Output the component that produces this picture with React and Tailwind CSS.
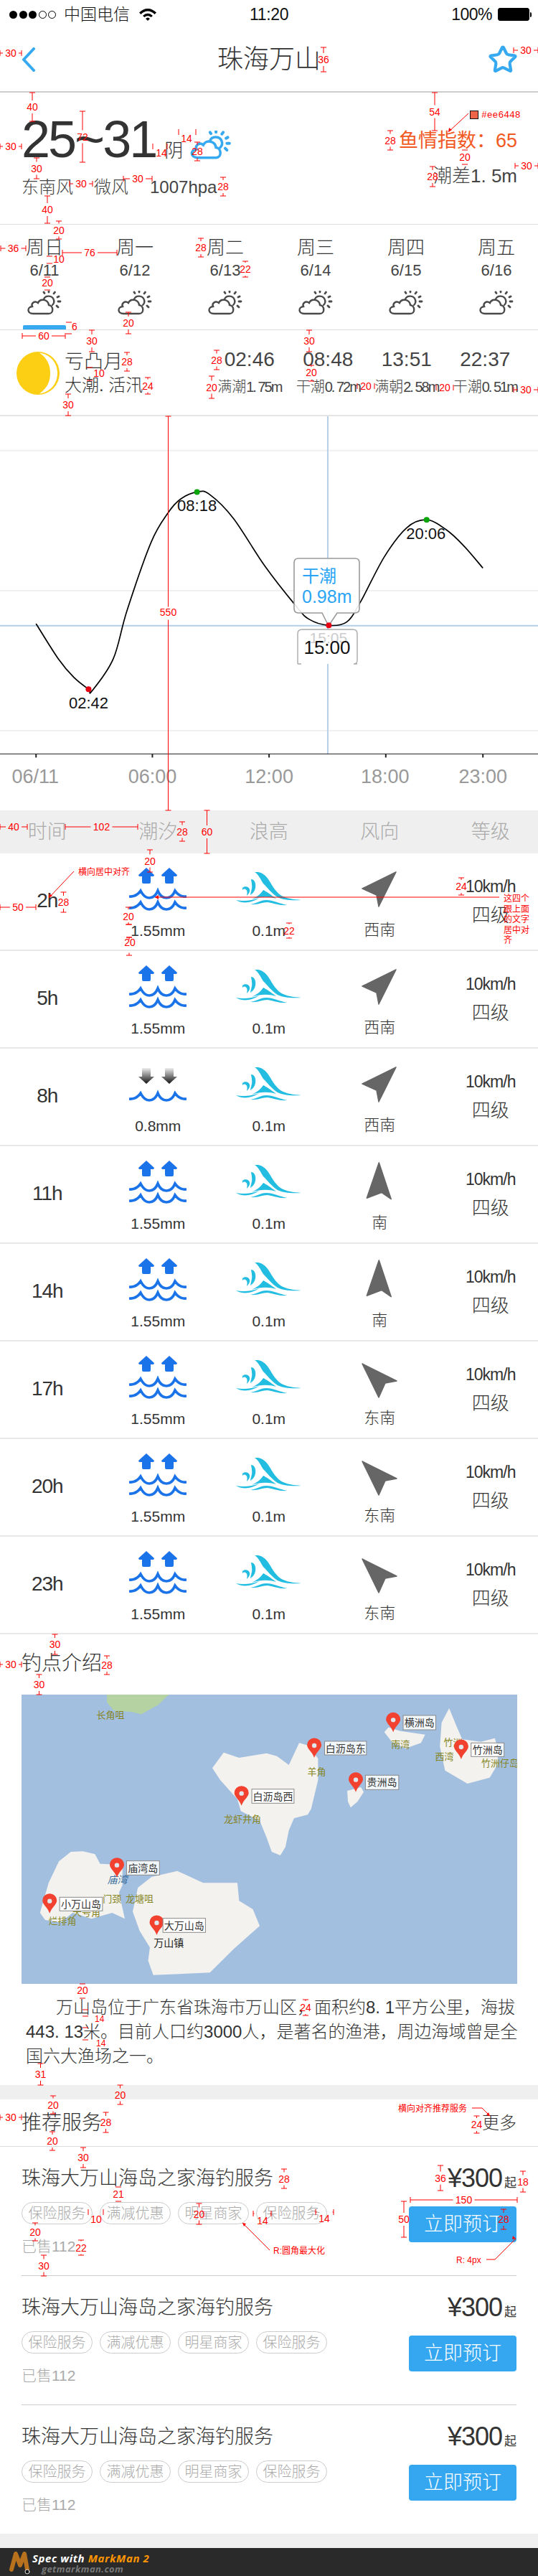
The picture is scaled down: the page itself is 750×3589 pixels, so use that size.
import React from 'react';
import { Star } from 'lucide-react';

const RED = '#f00';

// --- spec overlay helpers (red measuring marks on top of the design) ---
function HDim({ x1, x2, y, label, lx, ly }) {
  const cx = (x1 + x2) / 2;
  const gap = label.length * 4 + 3;
  const split = x2 - x1 > gap * 2 + 2;
  return (
    <g>
      <path d={`M${x1} ${y - 4}V${y + 4}M${x2} ${y - 4}V${y + 4}`} stroke={RED} fill="none" />
      {split && <path d={`M${x1} ${y}H${cx - gap}M${cx + gap} ${y}H${x2}`} stroke={RED} fill="none" />}
      <text x={lx ?? cx} y={ly ?? y} fill={RED} fontSize="14" textAnchor="middle" dominantBaseline="central">{label}</text>
    </g>
  );
}

function VDim({ x, y1, y2, label, lx, ly }) {
  const cy = (y1 + y2) / 2;
  const split = y2 - y1 > 20;
  return (
    <g>
      <path d={`M${x - 4} ${y1}H${x + 4}M${x - 4} ${y2}H${x + 4}`} stroke={RED} fill="none" />
      {split && <path d={`M${x} ${y1}V${cy - 9}M${x} ${cy + 9}V${y2}`} stroke={RED} fill="none" />}
      {label && <text x={lx ?? x} y={ly ?? cy} fill={RED} fontSize="14" textAnchor="middle" dominantBaseline="central">{label}</text>}
    </g>
  );
}

const hDims = [
  [0, 30, 74, '30'], [716, 750, 70, '30'], [0, 30, 204, '30'], [213, 233, 204, '14', 225, 213],
  [249, 273, 184, '14', 260, 193], [97, 129, 256, '30'], [172, 212, 249, '30'], [718, 750, 231, '30'],
  [1, 36, 346, '36'], [87, 163, 352, '76'], [31, 91, 468, '60'], [498, 522, 538, '20'], [608, 632, 540, '20'],
  [716, 750, 543, '30'], [0, 38, 1152, '40'], [91, 192, 1152, '102'], [0, 50, 1264, '50'], [0, 30, 2319, '30'],
  [0, 30, 2950, '30'], [572, 721, 3065, '150'], [123, 144, 3082, '10', 134, 3092], [353, 378, 3084, '14', 366, 3094],
  [440, 465, 3082, '14', 452, 3091],
];

const vDims = [
  [451, 66, 100, '36'], [45, 129, 169, '40'], [115, 155, 226, '72'], [275, 198, 224, '28'], [51, 220, 249, '30'],
  [311, 247, 273, '28'], [66, 273, 311, '40'], [606, 129, 182, '54'], [544, 182, 209, '28'], [648, 209, 229, '20'],
  [603, 232, 260, '28'], [82, 308, 333, '20'], [280, 332, 358, '28'], [69, 357, 367, '10', 82, 361],
  [342, 364, 386, '22'], [66, 386, 404, '20', 66, 394], [179, 435, 465, '20'], [96, 449, 465, '6', 104, 455],
  [128, 460, 490, '30'], [431, 460, 490, '30'], [177, 491, 517, '28'], [125, 512, 530, '10', 138, 520],
  [206, 526, 549, '24'], [95, 549, 579, '30'], [302, 488, 515, '28'], [295, 524, 555, '20'], [434, 509, 531, '20', 434, 519],
  [234.5, 580, 1129, '550', 234.5, 853], [254, 1145, 1172, '28'], [288.5, 1129, 1189, '60'], [209, 1184, 1215, '20'],
  [88.5, 1243, 1271, '28'], [643, 1223, 1247, '24'], [179, 1264, 1288, '20', 179, 1277], [180, 1288, 1306],
  [180, 1306, 1331, '20', 181, 1313], [403, 1286, 1307, '22'], [76.5, 2277, 2305, '30'], [149, 2307, 2333, '28'],
  [54.5, 2333, 2361, '30'], [115, 2764, 2784, '20', 115, 2773], [119, 2800, 2809], [119, 2825, 2842],
  [426, 2786, 2808, '24'], [56.5, 2875, 2905, '31'], [167.5, 2905, 2932, '20'], [74, 2920, 2945, '20'],
  [147.5, 2943, 2971, '28'], [73, 2970, 2996, '20'], [664.5, 2948, 2972, '24'], [116, 2992, 3020, '30'],
  [396, 3022, 3049, '28'], [165, 3047, 3067, '21'], [614, 3017, 3052, '36'], [729, 3025, 3054, '18'],
  [563, 3067, 3117, '50'], [702, 3078, 3106, '28'], [277.5, 3070, 3099, '20'], [49, 3097, 3122, '20'],
  [113, 3121, 3142, '22'], [61, 3142, 3171, '30'],
];

const notes = [
  [132, 2813, '14'], [134, 2847, '14'],
  [109, 1215, '横向居中对齐'], [702, 1252, '这四个'], [702, 1267, '跟上面'], [702, 1281, '的文字'], [702, 1296, '居中对'], [702, 1310, '齐'],
  [555, 2938, '横向对齐推荐服务'], [381, 3136, 'R:圆角最大化'], [636, 3149, 'R: 4px'],
];

const arrows = [
  'M653 158L625 184', 'M103 1214L68 1251', 'M696 1250H216', 'M658 2937H672L683 2948',
  'M376 3135L338 3097', 'M678 3148H690L719 3119',
];

function SpecOverlay() {
  return (
    <svg className="absolute left-0 top-0 pointer-events-none" width="750" height="3589">
      {hDims.map(([x1, x2, y, label, lx, ly], i) => <HDim key={i} x1={x1} x2={x2} y={y} label={label} lx={lx} ly={ly} />)}
      {vDims.map(([x, y1, y2, label, lx, ly], i) => <VDim key={i} x={x} y1={y1} y2={y2} label={label} lx={lx} ly={ly} />)}
      {arrows.map((d, i) => <path key={i} d={d} stroke={RED} fill="none" />)}
      <path d="M625 184l1-6 4 3zM68 1251l1-6 4 3zM216 1250l5-3v6zM683 2948l-5-1 3-4zM338 3097l5 1-3 4zM719 3119l-5 1 1-5z" fill={RED} />
      {notes.map(([x, y, t], i) => <text key={i} x={x} y={y} fill={RED} fontSize="12" dominantBaseline="central">{t}</text>)}
      <rect x="655.5" y="154.5" width="11" height="11" fill="#ee6448" stroke="#111" />
      <text x="671" y="160" fill={RED} fontSize="13" dominantBaseline="central" fontFamily="Liberation Mono">#ee6448</text>
    </svg>
  );
}

// --- icons ---
function WeatherIcon({ className, color = '#4a4a4a', sw = 2.4 }) {
  return (
    <svg className={className} viewBox="0 0 50 34" fill="none" stroke={color} strokeWidth={sw} strokeLinecap="round">
      <path d="M9 32H31C38 32 38 21 31 20C30 12 19 10 16 17C11 13 6 18 8 22C0 23 1 32 9 32Z" />
      <path d="M24 12C26 6 36 6 38 13C39 16 38 18 36 20" />
      <path d="M31 2V0.8M38 4L39.5 2M43 9L45 8M44 15H47M42 21L44 23M25 3.5L24 2" strokeWidth={sw + 0.4} />
    </svg>
  );
}

function Moon() {
  return (
    <svg width="60" height="60" viewBox="0 0 60 60" className="shrink-0">
      <circle cx="30" cy="30" r="30" fill="#fccf14" />
      <path d="M32 1.5C48 4 57 16 57 30C57 44 48 56 32 58.5C44 50 47 40 47 30C47 20 44 10 32 1.5Z" fill="#fff" />
    </svg>
  );
}

function Waves({ y }) {
  return (
    <path
      d={`M0 ${y + 9}Q10 ${y + 10} 16 ${y + 1}Q21 ${y + 11} 28 ${y + 11}Q36 ${y + 11} 40 ${y + 1}Q44 ${y + 11} 52 ${y + 11}Q60 ${y + 11} 64 ${y + 1}Q70 ${y + 10} 80 ${y + 9}`}
      stroke="#1a73e8" strokeWidth="3.6" fill="none"
    />
  );
}

const upArrow = 'M11 0L22 10Q22 12 20 12H17V20Q17 22 15 22H7Q5 22 5 20V12H2Q0 12 0 10Z';
const downArrow = 'M5 0H17V12H22L11 22L0 12H5Z';

function TideIcon({ down }) {
  return (
    <svg width="80" height="60" viewBox="0 0 80 60">
      <defs>
        <linearGradient id="fade" x1="0" y1="0" x2="0" y2="1">
          <stop offset="0" stopColor="#eeeeee" />
          <stop offset="1" stopColor="#111111" />
        </linearGradient>
      </defs>
      {down ? (
        <>
          <path d={downArrow} transform="translate(13 7)" fill="url(#fade)" />
          <path d={downArrow} transform="translate(45 7)" fill="url(#fade)" />
          <Waves y={41} />
        </>
      ) : (
        <>
          <path d={upArrow} transform="translate(13 0)" fill="#1a73e8" />
          <path d={upArrow} transform="translate(45 0)" fill="#1a73e8" />
          <Waves y={31} />
          <Waves y={47} />
        </>
      )}
    </svg>
  );
}

function WaveIcon() {
  return (
    <svg width="92" height="48" viewBox="0 0 92 48" fill="#22bde0">
      <path d="M26 0C34 -1 40 3 45 10C50 18 55 27 62 32C70 37 80 38 91 39C78 40 66 39 58 35C50 30 44 22 38 16C34 10 32 4 26 0Z" />
      <path d="M38 25C42 27 48 31 56 37C46 34 34 34 22 38C30 34 35 30 38 25Z" />
      <path d="M21 10C26 10 28 16 27 22C26 27 23 30 20 32C21 26 23 22 22 17C22 14 21 12 21 10Z" />
      <path d="M9 22C12 19 18 20 19 24C20 28 17 31 15 33C16 29 16 25 13 24C11 23 10 24 9 25Z" />
      <path d="M0 39C10 41 22 40 32 36C24 42 12 44 4 41Z" />
      <path d="M20 45C28 44 34 39 42 39C52 39 60 44 72 46C60 47 52 43 44 42C36 42 30 46 20 45Z" />
    </svg>
  );
}

function NavArrow({ className }) {
  return (
    <svg width="50" height="50" viewBox="0 0 50 50" className={className}>
      <path d="M48 1L1 24L21 33L24 49Z" fill="#666" stroke="#666" strokeWidth="1.5" strokeLinejoin="round" />
    </svg>
  );
}

// --- chart ---
const pts = [
  [105, 756], [170, 880], [215, 945], [258, 987], [268, 993], [330, 880], [370, 710], [440, 470], [490, 365], [525, 318],
  [574, 292], [610, 300], [680, 385], [770, 550], [860, 690], [900, 740], [958, 762], [1010, 750], [1050, 680], [1120, 520],
  [1185, 418], [1243, 390], [1300, 425], [1350, 480], [1407, 560],
];
const cx = (z) => z / 2.09;
const cy = (z) => z / 2.529 - 10;

function curvePath() {
  const p = pts.map(([x, y]) => [cx(x), cy(y)]);
  let d = `M${p[0][0]} ${p[0][1]}`;
  for (let i = 0; i < p.length - 1; i++) {
    const a = p[i - 1] || p[i];
    const b = p[i];
    const c = p[i + 1];
    const e = p[i + 2] || c;
    d += `C${b[0] + (c[0] - a[0]) / 6} ${b[1] + (c[1] - a[1]) / 6} ${c[0] - (e[0] - b[0]) / 6} ${c[1] - (e[1] - b[1]) / 6} ${c[0]} ${c[1]}`;
  }
  return d;
}

function TideChart() {
  return (
    <svg width="750" height="549" viewBox="0 0 750 549" className="block">
      {[146, 640, 1133].map((z) => <line key={z} x1="0" x2="750" y1={cy(z)} y2={cy(z)} stroke="#f0f0f0" strokeWidth="2" />)}
      <line x1="0" x2="750" y1={cy(763)} y2={cy(763)} stroke="#b6cfe9" strokeWidth="2" />
      <line x1={cx(955)} x2={cx(955)} y1="0" y2={cy(1215)} stroke="#b6cfe9" strokeWidth="2" />
      <path d={curvePath()} fill="none" stroke="#000" strokeWidth="1.7" />
      <line x1="0" x2="750" y1={cy(1215)} y2={cy(1215)} stroke="#222" />
      {[105, 444, 784, 1124, 1407].map((z) => <line key={z} x1={cx(z)} x2={cx(z)} y1={cy(1215)} y2={cy(1215) + 5} stroke="#222" strokeWidth="2" />)}
      {[['06/11', 103], ['06:00', 444], ['12:00', 784], ['18:00', 1122], ['23:00', 1407]].map(([t, z]) => (
        <text key={t} x={cx(z)} y={cy(1295)} fill="#999" fontSize="27" textAnchor="middle" dominantBaseline="central">{t}</text>
      ))}
      <circle cx={cx(258)} cy={cy(987)} r="4" fill="#e60012" />
      <circle cx={cx(574)} cy={cy(292)} r="4" fill="#0aa50a" />
      <circle cx={cx(1243)} cy={cy(390)} r="4" fill="#0aa50a" />
      {[['02:42', 258, 1035], ['08:18', 574, 340], ['20:06', 1241, 438]].map(([t, x, y]) => (
        <text key={t} x={cx(x)} y={cy(y)} fill="#111" fontSize="22" textAnchor="middle" dominantBaseline="central">{t}</text>
      ))}
      <path d="M416 198H495Q501 198 501 204V268Q501 274 495 274H470L458 292L449 274H416Q410 274 410 268V204Q410 198 416 198Z" fill="#fff" fillOpacity="0.9" stroke="#999" strokeWidth="1.6" />
      <circle cx={cx(958)} cy={cy(762)} r="4" fill="#e60012" />
      <text x="421" y="222" fill="#2aa5f5" fontSize="24" dominantBaseline="central">干潮</text>
      <text x="421" y="251" fill="#2aa5f5" fontSize="25" dominantBaseline="central">0.98m</text>
      <path d="M415 345V303Q415 297 421 297H492Q498 297 498 303V340Q498 345 493 345M420 345H415M493 345H498" fill="#fff" stroke="#aaa" strokeWidth="1.4" />
      <text x={cx(957)} y={cy(805)} fill="#ccc" fontSize="21" textAnchor="middle" dominantBaseline="central">15:05</text>
      <text x={cx(953)} y={cy(840)} fill="#111" fontSize="26" textAnchor="middle" dominantBaseline="central">15:00</text>
    </svg>
  );
}

// --- map ---
const mx = (z) => z / 2.09 - 29.2;
const my = (z) => z / 3 - 111;
const poly = (a) => a.map(([x, y]) => `${mx(x)},${my(y)}`).join(' ');

const islands = [
  [[617, 640], [650, 575], [695, 597], [775, 578], [805, 590], [840, 627], [870, 535], [895, 545], [925, 600], [925, 690], [905, 810], [895, 835], [855, 850], [840, 900], [830, 970], [815, 1005], [790, 990], [775, 930], [755, 860], [700, 820], [690, 770], [640, 690]],
  [[1118, 490], [1130, 470], [1165, 485], [1237, 500], [1225, 535], [1180, 558], [1140, 530]],
  [[1307, 390], [1330, 470], [1345, 520], [1400, 530], [1440, 515], [1445, 540], [1450, 620], [1425, 680], [1360, 705], [1295, 650], [1280, 550], [1285, 450]],
  [[1010, 735], [1050, 720], [1058, 740], [1040, 780], [1020, 805], [1012, 780]],
  [[115, 1245], [140, 1120], [170, 1030], [205, 990], [240, 988], [275, 1000], [290, 1040], [355, 1045], [355, 1130], [345, 1160], [362, 1270], [325, 1245], [265, 1270], [210, 1245], [175, 1285], [130, 1275]],
  [[385, 1240], [400, 1140], [440, 1095], [515, 1070], [590, 1120], [690, 1120], [695, 1195], [735, 1230], [755, 1300], [680, 1395], [610, 1495], [445, 1505], [430, 1445], [435, 1390], [405, 1320]],
];
const greenland = [[310, 333], [490, 333], [460, 375], [410, 415], [380, 405], [330, 400], [310, 365]];

const placeLabels = [
  ['长角咀', 320, 418], ['南湾', 1165, 540], ['羊角', 921, 655], ['龙虾井角', 705, 852], ['竹洲', 1318, 533], ['西湾', 1293, 592],
  ['竹洲仔岛', 1455, 618], ['门颈', 325, 1187], ['龙塘咀', 405, 1187], ['烂排角', 180, 1280], ['天号角', 250, 1243],
];

const spots = [
  ['横洲岛', 1144, 490, 1173, 1268, 420, 480], ['白沥岛东', 914, 597, 944, 1066, 528, 585], ['白沥岛西', 702, 797, 732, 855, 728, 787],
  ['贵洲岛', 1035, 740, 1063, 1160, 670, 730], ['竹洲岛', 1342, 603, 1371, 1467, 535, 592], ['庙湾岛', 339, 1097, 367, 463, 1028, 1087],
  ['小万山岛', 143, 1247, 172, 297, 1180, 1237], ['大万山岛', 455, 1338, 473, 597, 1268, 1327],
];

function MapView() {
  return (
    <svg width="691" height="403" viewBox="0 0 691 403" className="block bg-[#a3bfdf]">
      <polygon points={poly(greenland)} fill="#b5d3a2" />
      {islands.map((a, i) => <polygon key={i} points={poly(a)} fill="#f3f2ee" />)}
      {placeLabels.map(([t, x, y]) => (
        <text key={t} x={mx(x)} y={my(y)} fill="#85851f" fontSize="13" textAnchor="middle" dominantBaseline="central">{t}</text>
      ))}
      <text x={mx(340)} y={my(1107)} fill="#3a6fa0" fontSize="14" fontStyle="italic" textAnchor="middle" dominantBaseline="central">庙湾</text>
      <text x={mx(490)} y={my(1370)} fill="#222" fontSize="14" textAnchor="middle" dominantBaseline="central">万山镇</text>
      {spots.map(([t, x, y, x1, x2, y1, y2]) => (
        <g key={t}>
          <path d={`M${mx(x)} ${my(y)}C${mx(x) - 3} ${my(y) - 9} ${mx(x) - 10} ${my(y) - 12} ${mx(x) - 10} ${my(y) - 18}A10 9.5 0 0 1 ${mx(x) + 10} ${my(y) - 18}C${mx(x) + 10} ${my(y) - 12} ${mx(x) + 3} ${my(y) - 9} ${mx(x)} ${my(y)}Z`} fill="#f2412e" />
          <circle cx={mx(x)} cy={my(y) - 17} r="3.2" fill="#dfe6ec" />
          <rect x={mx(x1)} y={my(y1)} width={(x2 - x1) / 2.09} height={(y2 - y1) / 3} fill="#fff" fillOpacity="0.85" stroke="#8a8a8a" />
          <text x={(mx(x1) + mx(x2)) / 2} y={(my(y1) + my(y2)) / 2} fill="#333" fontSize="14" textAnchor="middle" dominantBaseline="central">{t}</text>
        </g>
      ))}
    </svg>
  );
}

// --- data ---
const forecast = [
  ['周日', '6/11'], ['周一', '6/12'], ['周二', '6/13'], ['周三', '6/14'], ['周四', '6/15'], ['周五', '6/16'],
];
const tides = [
  ['02:46', '满潮', '1. 75m'], ['08:48', '干潮', '0. 72m'], ['13:51', '满朝', '2. 58m'], ['22:37', '干潮', '0. 51m'],
];
const navNE = '';
const navN = '-rotate-45 translate-y-[6px]';
const navNW = '-rotate-90 translate-y-[4px]';
const rows = [
  ['2h', false, '1.55mm', '西南', navNE], ['5h', false, '1.55mm', '西南', navNE], ['8h', true, '0.8mm', '西南', navNE],
  ['11h', false, '1.55mm', '南', navN], ['14h', false, '1.55mm', '南', navN], ['17h', false, '1.55mm', '东南', navNW],
  ['20h', false, '1.55mm', '东南', navNW], ['23h', false, '1.55mm', '东南', navNW],
];
const tags = ['保险服务', '满减优惠', '明星商家', '保险服务'];

function ServiceItem({ last }) {
  return (
    <div className={`mx-[30px] flex justify-between ${last ? 'h-[179px]' : 'h-[180px] border-b border-[#ccc]'}`}>
      <div className="pt-[30px]">
        <div className="text-[27px] leading-[28px] text-[#333] font-light">珠海大万山海岛之家海钓服务</div>
        <div className="flex gap-[11px] mt-[19px]">
          {tags.map((t, i) => (
            <span key={i} className="w-[99px] h-[31px] -ml-px first:ml-0 flex items-center justify-center rounded-full border border-[#ccc] text-[20px] text-[#aaa] font-light">{t}</span>
          ))}
        </div>
        <div className="mt-[20px] text-[21px] leading-[22px] text-[#aaa] font-light">已售112</div>
      </div>
      <div className="pt-[26px] flex flex-col items-end">
        <div className="flex items-baseline leading-[36px] text-[#333]">
          <span className="text-[36px] tracking-[-1px]">¥300</span>
          <span className="text-[17px] ml-[3px]">起</span>
        </div>
        <button className="mt-[14px] w-[150px] h-[50px] rounded-[4px] bg-[#35a7f0] text-white text-[27px] font-light">立即预订</button>
      </div>
    </div>
  );
}

export default function App() {
  return (
    <div className="relative w-[750px] h-[3589px] overflow-hidden bg-white text-[#333] font-['Liberation_Sans','Noto_Sans_CJK_SC',sans-serif]">
      {/* status bar */}
      <div className="h-[40px] flex items-center justify-between pl-[13px] pr-[9px] text-[#111] relative">
        <div className="flex items-center">
          <div className="flex gap-[2.5px]">
            {[0, 1, 2].map((i) => <span key={i} className="w-[11px] h-[11px] rounded-full bg-black" />)}
            {[3, 4].map((i) => <span key={i} className="w-[11px] h-[11px] rounded-full border border-black" />)}
          </div>
          <span className="ml-[11px] text-[23px] leading-none font-light">中国电信</span>
          <svg width="24" height="18" viewBox="0 0 24 18" className="ml-[13px]">
            <path d="M0 6.5C7 -1 17 -1 24 6.5L21.5 9C16 3 8 3 2.5 9Z" />
            <path d="M5 11C9 6.5 15 6.5 19 11L16.5 13C14 10.5 10 10.5 7.5 13Z" />
            <path d="M9 15C11 13 13 13 15 15L12 18Z" />
          </svg>
        </div>
        <span className="absolute left-[348px] text-[23px] tracking-[-0.3px]">11:20</span>
        <div className="flex items-center">
          <span className="text-[23px] tracking-[-0.5px]">100%</span>
          <div className="ml-[8px] w-[44px] h-[18px] rounded-[3px] border border-black bg-black" />
          <div className="ml-px w-[2px] h-[7px] bg-black rounded-r-sm" />
        </div>
      </div>

      {/* nav */}
      <div className="h-[89px] border-b-2 border-[#ccc] grid grid-cols-[1fr_auto_1fr] items-center pl-[30px] pr-[30px] pb-[2px]">
        <svg width="20" height="34" viewBox="0 0 20 34" fill="none" stroke="#36a9f0" strokeWidth="4" strokeLinecap="round" strokeLinejoin="round">
          <path d="M17 2L3 17L17 32" />
        </svg>
        <h1 className="text-[36px] leading-none font-light text-[#333]">珠海万山</h1>
        <Star size={42} strokeWidth={2.4} color="#36a9f0" className="justify-self-end -mr-[2px]" />
      </div>

      {/* today */}
      <div className="h-[184px] border-b border-[#ddd] flex justify-between pl-[30px] pr-[29px]">
        <div className="pt-[29px]">
          <div className="flex items-start h-[72px]">
            <span className="text-[72px] leading-[72px] tracking-[-3px] text-[#333]">25~31</span>
            <span className="ml-[12px] mt-[38px] text-[26px] leading-[28px] font-light">阴</span>
            <WeatherIcon className="ml-[9px] mt-[24px] w-[60px] h-[40px]" color="#36a9f0" sw={3} />
          </div>
          <div className="mt-[17px] flex items-center text-[24px] leading-[28px] text-[#444] font-light">
            <span>东南风</span>
            <span className="ml-[29px]">微风</span>
            <span className="ml-[30px]">1007hpa</span>
          </div>
        </div>
        <div className="pt-[53px] flex flex-col items-end">
          <div className="text-[27px] leading-[28px] text-[#f25a24]">鱼情指数：65</div>
          <div className="mt-[21px] text-[26px] leading-[28px] text-[#444] font-light">潮差1. 5m</div>
        </div>
      </div>

      {/* 6 day forecast */}
      <div className="h-[147px] border-b border-[#ddd] flex -ml-px">
        {forecast.map(([day, date], i) => (
          <div key={day} className="w-[126px] shrink-0 flex flex-col items-center pt-[18px]">
            <div className="text-[26px] leading-[28px] font-light">{day}</div>
            <div className="mt-[6px] text-[22px] leading-[24px] text-[#444]">{date}</div>
            <WeatherIcon className="mt-[16px] w-[50px] h-[34px] shrink-0" />
            {i === 0 && <div className="mt-[14px] w-[60px] h-[6px] shrink-0 bg-[#36a9f0] rounded-t-[2px]" />}
          </div>
        ))}
      </div>

      {/* moon + tide times */}
      <div className="h-[120px] border-b-2 border-[#e5e5e5] flex">
        <div className="w-[293px] flex pl-[23px] pt-[30px]">
          <Moon />
          <div className="ml-[7px]">
            <div className="text-[27px] leading-[28px] font-light">亏凸月</div>
            <div className="mt-[7px] text-[24px] leading-[24px] font-light">大潮. 活汛</div>
          </div>
        </div>
        {tides.map(([time, kind, val]) => (
          <div key={time} className="w-[109.5px] shrink-0 flex flex-col items-center pt-[27px] text-[#444]">
            <div className="text-[28px] leading-[28px]">{time}</div>
            <div className="mt-[13px] text-[20px] leading-[22px] whitespace-nowrap font-light">
              {kind}<span className="tracking-[-2px]">{val}</span>
            </div>
          </div>
        ))}
      </div>

      <TideChart />

      {/* table */}
      <div className="h-[60px] bg-[#efefef] grid grid-cols-[repeat(5,154.5px)] -ml-[11.5px] w-[772px] items-center text-center text-[27px] text-[#aaa] font-light">
        {['时间', '潮汐', '浪高', '风向', '等级'].map((t) => <div key={t}>{t}</div>)}
      </div>
      {rows.map(([time, down, tide, dir, rot], i) => (
        <div key={i} className="h-[136px] border-b-2 border-[#e8e8e8]">
          <div className="grid grid-cols-[repeat(5,154.5px)] -ml-[11.5px] w-[772px] h-full text-center text-[#333]">
            <div className="flex items-center justify-center pb-[3px] text-[28px] tracking-[-1px]">{time}</div>
            <div className="flex flex-col items-center pt-[20px]">
              <TideIcon down={down} />
              <div className="mt-[16px] text-[21px] leading-[24px]">{tide}</div>
            </div>
            <div className="flex flex-col items-center pt-[26px]">
              <WaveIcon />
              <div className="mt-[22px] text-[21px] leading-[24px]">0.1m</div>
            </div>
            <div className="flex flex-col items-center pt-[25px]">
              <NavArrow className={rot} />
              <div className="mt-[20px] text-[22px] leading-[24px] font-light">{dir}</div>
            </div>
            <div className="flex flex-col items-center pt-[34px]">
              <div className="text-[23px] leading-[24px] tracking-[-1px]">10km/h</div>
              <div className="mt-[14px] text-[26px] leading-[28px] font-light">四级</div>
            </div>
          </div>
        </div>
      ))}

      {/* spot intro */}
      <div className="h-[628px]">
        <h2 className="pt-[27px] pl-[30px] text-[28px] leading-[28px] font-light">钓点介绍</h2>
        <div className="ml-[30px] mt-[29px]"><MapView /></div>
        <div className="mt-[16px] pl-[36px] text-[24px] leading-[34px] text-[#333] font-light whitespace-nowrap">
          <div className="pl-[42px]">万山岛位于广东省珠海市万山区，面积约8. 1平方公里，海拔</div>
          <div>443. 13米。目前人口约3000人，是著名的渔港，周边海域曾是全</div>
          <div>国六大渔场之一。</div>
        </div>
      </div>

      <div className="h-[20px] bg-[#efefef]" />

      {/* services */}
      <div className="h-[66px] border-b border-[#ddd] flex items-center justify-between px-[30px] pt-[0px]">
        <h2 className="text-[28px] leading-[28px] font-light">推荐服务</h2>
        <span className="text-[24px] leading-[24px] font-light">更多</span>
      </div>
      <ServiceItem />
      <ServiceItem />
      <ServiceItem last />

      <div className="h-[20px] bg-[#efefef]" />

      {/* markman footer strip */}
      <div className="h-[39px] bg-[#2a2a2a] flex items-center relative pl-[12px] font-['Open_Sans',sans-serif] italic font-bold whitespace-nowrap">
        <svg width="30" height="36" viewBox="0 0 30 36" fill="none" strokeLinecap="round">
          <path d="M4 28L10 6L16 22L22 6L26 28" stroke="#b8711c" strokeWidth="6" strokeLinejoin="round" />
          <circle cx="26" cy="31" r="3" fill="#111" stroke="#ddd" />
        </svg>
        <div className="absolute left-[45px] top-[4px] text-[15px] leading-[20px] tracking-[0.6px] text-white">
          Spec with <span className="text-[#ff9500]">MarkMan 2</span>
        </div>
        <div className="absolute left-[58px] top-[20px] text-[13px] leading-[18px] tracking-[0.4px] text-[#777]">getmarkman.com</div>
      </div>

      <SpecOverlay />
    </div>
  );
}
